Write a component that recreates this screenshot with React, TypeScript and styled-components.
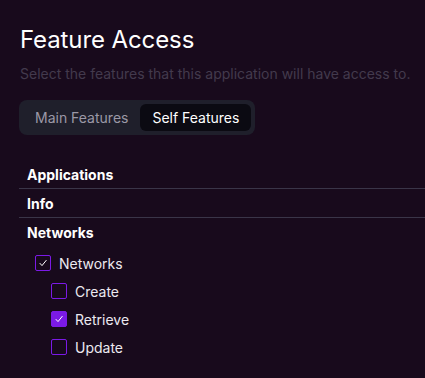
import styled, { createGlobalStyle } from 'styled-components';

const GlobalStyle = createGlobalStyle`
	html, body {
		margin: 0;
		background: #180a1c;
		font-family: Inter, 'Noto Sans', sans-serif;
		color: #f4f2f6;
	}
`;

interface Feature {
	label: string;
	checked: boolean;
}

const networkFeatures: Feature[] = [
	{ label: 'Create', checked: false },
	{ label: 'Retrieve', checked: true },
	{ label: 'Update', checked: false },
];

function Check({ filled }: { filled?: boolean }) {
	return (
		<CheckBox filled={filled}>
			<svg width='10' height='10' viewBox='0 0 10 10' fill='none'>
				<path d='M2 5.4 L4 7.6 L8.2 2.4' stroke='#fff' strokeWidth='1' strokeLinecap='round' strokeLinejoin='round' />
			</svg>
		</CheckBox>
	);
}

export default function App() {
	return (
		<Page>
			<GlobalStyle />
			<Title>Feature Access</Title>
			<Subtitle>Select the features that this application will have access to.</Subtitle>
			<Tabs>
				<Tab>Main Features</Tab>
				<Tab active>Self Features</Tab>
			</Tabs>
			<Sections>
				<SectionHeader>Applications</SectionHeader>
				<SectionHeader>Info</SectionHeader>
				<SectionHeader last>Networks</SectionHeader>
				<CheckList>
					<CheckRow>
						<Check />
						<span>Networks</span>
					</CheckRow>
					<Children>
						{networkFeatures.map(f => (
							<CheckRow key={f.label}>
								{f.checked ? <Check filled /> : <CheckBox />}
								<span>{f.label}</span>
							</CheckRow>
						))}
					</Children>
				</CheckList>
			</Sections>
		</Page>
	);
}

const Page = styled.div`
	padding: 25px 0 0 20px;
`;

const Title = styled.h1`
	margin: 0;
	font-size: 24px;
	line-height: 29px;
	font-weight: 400;
	color: #ffffff;
	letter-spacing: -0.1px;
`;

const Subtitle = styled.p`
	margin: 11px 0 0;
	font-size: 14px;
	line-height: 17px;
	color: #433a4d;
	white-space: nowrap;
`;

const Tabs = styled.div`
	margin-top: 18px;
	display: inline-flex;
	padding: 4px;
	background: #1f1f2b;
	border-radius: 8px;
	margin-left: -1px;
`;

const Tab = styled.div<{ active?: boolean }>`
	padding: 0 12px;
	height: 27px;
	display: flex;
	align-items: center;
	font-size: 14px;
	border-radius: 6px;
	color: ${p => (p.active ? '#ffffff' : '#9b98a6')};
	background: ${p => (p.active ? '#0b0a12' : 'transparent')};
`;

const Sections = styled.div`
	margin-top: 25px;
	margin-left: -1px;
`;

const SectionHeader = styled.div<{ last?: boolean }>`
	height: 28px;
	display: flex;
	align-items: center;
	padding-left: 8px;
	font-size: 14px;
	font-weight: 700;
	color: #ffffff;
	border-bottom: ${p => (p.last ? 'none' : '1px solid #3a3548')};
`;

const CheckList = styled.div`
	margin-top: 3px;
`;

const CheckRow = styled.div`
	height: 28px;
	display: flex;
	align-items: center;
	gap: 8px;
	padding-left: 16px;
	font-size: 14px;
	color: #ece9f0;
`;

const Children = styled.div`
	padding-left: 16px;
`;

const CheckBox = styled.div<{ filled?: boolean }>`
	width: 16px;
	height: 16px;
	box-sizing: border-box;
	border: 1px solid #7b1ae6;
	border-radius: 2px;
	background: ${p => (p.filled ? '#7b1ae6' : 'transparent')};
	display: flex;
	align-items: center;
	justify-content: center;
`;
